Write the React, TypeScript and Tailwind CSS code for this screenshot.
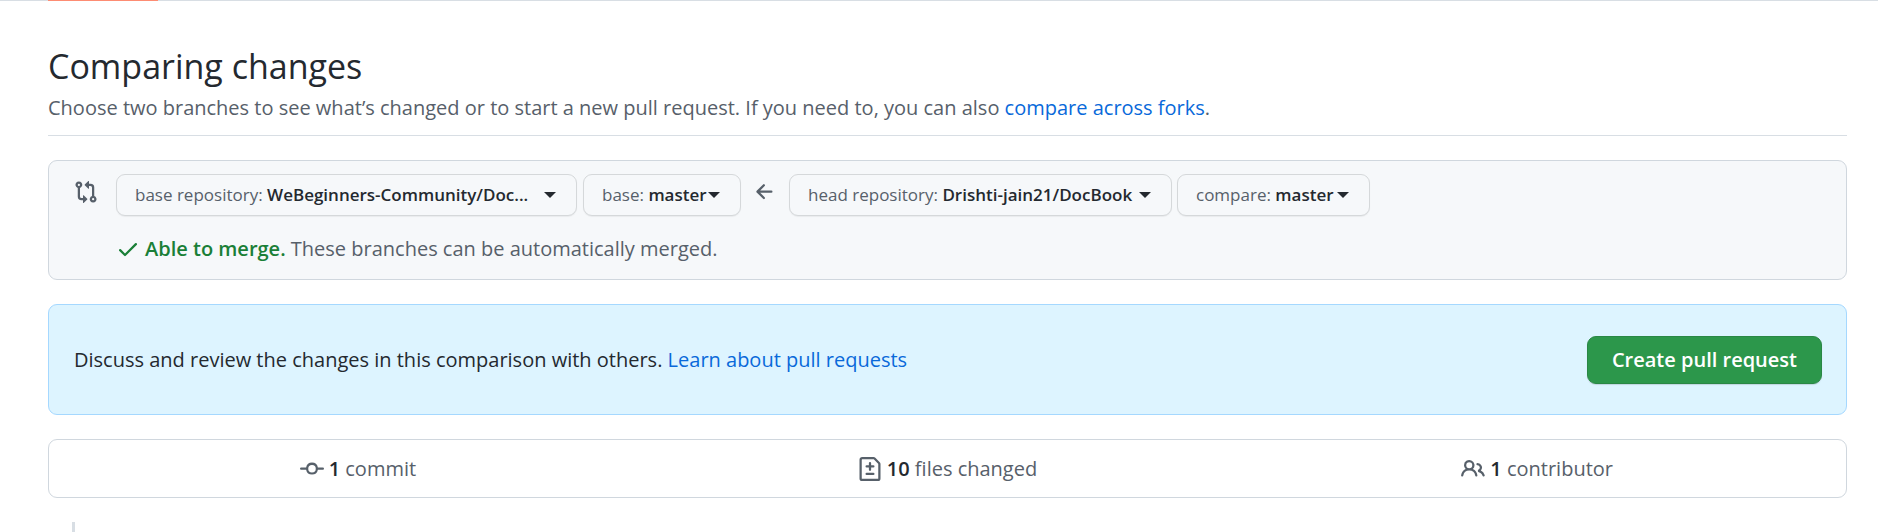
import React from "react";

type IconProps = { color?: string };

function Octicon({ color = "fill-[#57606a]", children }: IconProps & { children: React.ReactNode }) {
  return (
    <svg viewBox="0 0 16 16" aria-hidden="true" className={`size-6 shrink-0 ${color}`}>
      {children}
    </svg>
  );
}

const CompareIcon = () => (
  <Octicon>
    <path
      fillRule="evenodd"
      d="M9.573.677L7.177 3.073a.25.25 0 000 .354l2.396 2.396A.25.25 0 0010 5.646V4h1a1 1 0 011 1v5.628a2.251 2.251 0 101.5 0V5A2.5 2.5 0 0011 2.5h-1V.854a.25.25 0 00-.427-.177zM12 12.75a.75.75 0 111.5 0 .75.75 0 01-1.5 0zM6 12v-1.646a.25.25 0 01.427-.177l2.396 2.396a.25.25 0 010 .354l-2.396 2.396A.25.25 0 016 15.146V13.5H5A2.5 2.5 0 012.5 11V5.372a2.25 2.25 0 111.5 0V11a1 1 0 001 1h1zM4 3.25a.75.75 0 10-1.5 0 .75.75 0 001.5 0z"
    />
  </Octicon>
);

const ArrowLeftIcon = () => (
  <Octicon>
    <path
      fillRule="evenodd"
      d="M7.78 12.53a.75.75 0 01-1.06 0L2.47 8.28a.75.75 0 010-1.06l4.25-4.25a.75.75 0 011.06 1.06L4.81 7h7.44a.75.75 0 010 1.5H4.81l2.97 2.97a.75.75 0 010 1.06z"
    />
  </Octicon>
);

const CheckIcon = () => (
  <Octicon color="fill-[#1a7f37]">
    <path
      fillRule="evenodd"
      d="M13.78 4.22a.75.75 0 010 1.06l-7.25 7.25a.75.75 0 01-1.06 0L2.22 9.28a.75.75 0 011.06-1.06L6 10.94l6.72-6.72a.75.75 0 011.06 0z"
    />
  </Octicon>
);

const CommitIcon = () => (
  <Octicon>
    <path
      fillRule="evenodd"
      d="M10.5 7.75a2.5 2.5 0 11-5 0 2.5 2.5 0 015 0zm1.43.75a4.002 4.002 0 01-7.86 0H.75a.75.75 0 110-1.5h3.32a4.001 4.001 0 017.86 0h3.32a.75.75 0 110 1.5h-3.32z"
    />
  </Octicon>
);

const FileDiffIcon = () => (
  <Octicon>
    <path
      fillRule="evenodd"
      d="M2.75 1.5a.25.25 0 00-.25.25v12.5c0 .138.112.25.25.25h10.5a.25.25 0 00.25-.25V4.664a.25.25 0 00-.073-.177l-2.914-2.914a.25.25 0 00-.177-.073H2.75zM1 1.75C1 .784 1.784 0 2.75 0h7.586c.464 0 .909.184 1.237.513l2.914 2.914c.329.328.513.773.513 1.237v9.586A1.75 1.75 0 0113.25 16H2.75A1.75 1.75 0 011 14.25V1.75zm7 1.5a.75.75 0 01.75.75v1.5h1.5a.75.75 0 010 1.5h-1.5v1.5a.75.75 0 01-1.5 0V7h-1.5a.75.75 0 010-1.5h1.5V4A.75.75 0 018 3.25zm-3 8a.75.75 0 01.75-.75h4.5a.75.75 0 010 1.5h-4.5a.75.75 0 01-.75-.75z"
    />
  </Octicon>
);

const PeopleIcon = () => (
  <Octicon>
    <path
      fillRule="evenodd"
      d="M5.5 3.5a2 2 0 100 4 2 2 0 000-4zM2 5.5a3.5 3.5 0 115.898 2.549 5.507 5.507 0 013.034 4.084.75.75 0 11-1.482.235 4.001 4.001 0 00-7.9 0 .75.75 0 01-1.482-.236A5.507 5.507 0 013.102 8.05 3.49 3.49 0 012 5.5zM11 4a.75.75 0 100 1.5 1.5 1.5 0 01.666 2.844.75.75 0 00-.416.672v.352a.75.75 0 00.574.73c1.2.289 2.162 1.2 2.522 2.372a.75.75 0 101.434-.44 5.01 5.01 0 00-2.56-3.012A3 3 0 0011 4z"
    />
  </Octicon>
);

function RefPicker({ label, value, className = "" }: { label: string; value: string; className?: string }) {
  return (
    <button
      type="button"
      className={`flex h-[42px] items-center rounded-[9px] border border-[#d5d8da] bg-[#f6f8fa] pr-5 pl-[18px] text-[17px] leading-[30px] font-semibold text-[#24292f] shadow-[0_1px_1px_rgba(27,31,36,0.06)] ${className}`}
    >
      <span className="whitespace-nowrap">
        <span className="font-normal text-[#57606a]">{label}</span> {value}
      </span>
      <svg viewBox="0 0 12 6" aria-hidden="true" className="ml-auto h-[6px] w-3 shrink-0 fill-[#24292f]">
        <path d="M0 0h12L6 6z" />
      </svg>
    </button>
  );
}

function Stat({ icon, count, label }: { icon: React.ReactNode; count: number; label: string }) {
  return (
    <li>
      <a href="#" className="flex items-center justify-center gap-[5px] pt-[13px] pb-3">
        {icon}
        <span>
          <strong className="font-semibold text-[#24292f]">{count}</strong> {label}
        </span>
      </a>
    </li>
  );
}

export default function App() {
  return (
    <div className="bg-white font-['Open_Sans','Noto_Sans',sans-serif] text-[20px] leading-[32px] text-[#57606a]">
      <div className="h-px bg-[#d8dee4] pl-12">
        <div className="h-px w-[110px] bg-[#fd8c73]" />
      </div>
      <main className="pt-[39px] pr-[31px] pl-12">
        <header className="border-b border-[#d8dee4] pb-[11px]">
          <h1 className="text-[34px] leading-[52px] text-[#24292f]">Comparing changes</h1>
          <p>
            Choose two branches to see what’s changed or to start a new pull request. If you need to, you can also{" "}
            <a href="#" className="text-[#0969da]">compare across forks</a>.
          </p>
        </header>

        <section className="mt-6 rounded-[9px] border border-[#d0d7de] bg-[#f6f8fa] pt-[13px] pr-6 pb-[14px] pl-[25px]">
          <div className="flex items-center">
            <div className="mr-[18px] mb-[6px]"><CompareIcon /></div>
            <RefPicker label="base repository:" value="WeBeginners-Community/Doc..." className="w-[461px]" />
            <RefPicker label="base:" value="master" className="ml-1.5 w-[158px]" />
            <div className="mx-3 mb-[6px]"><ArrowLeftIcon /></div>
            <RefPicker label="head repository:" value="Drishti-jain21/DocBook" className="w-[383px]" />
            <RefPicker label="compare:" value="master" className="ml-[5px] w-[193px]" />
          </div>
          <p className="mt-[17px] ml-[42px] flex items-center">
            <CheckIcon />
            <span className="ml-[5px]">
              <strong className="font-semibold text-[#1a7f37]">Able to merge.</strong> These branches can be automatically merged.
            </span>
          </p>
        </section>

        <section className="mt-6 flex items-center justify-between rounded-[9px] border border-[#a5d8ff] bg-[#ddf4ff] pt-[31px] pr-6 pb-[30px] pl-[25px]">
          <p className="text-[#24292f]">
            Discuss and review the changes in this comparison with others.{" "}
            <a href="#" className="text-[#0969da]">Learn about pull requests</a>
          </p>
          <button
            type="button"
            className="h-12 rounded-[9px] border border-[#2a8745] bg-[#2c974b] px-6 font-semibold text-white shadow-[0_1px_1px_rgba(27,31,36,0.15)]"
          >
            Create pull request
          </button>
        </section>

        <ul className="mt-6 grid grid-cols-[11fr_10fr_11fr] rounded-[9px] border border-[#d0d7de]">
          <Stat icon={<CommitIcon />} count={1} label="commit" />
          <Stat icon={<FileDiffIcon />} count={10} label="files changed" />
          <Stat icon={<PeopleIcon />} count={1} label="contributor" />
        </ul>
        <div className="mt-6 ml-6 h-[10px] w-[3px] bg-[#d8dee4]" />
      </main>
    </div>
  );
}
